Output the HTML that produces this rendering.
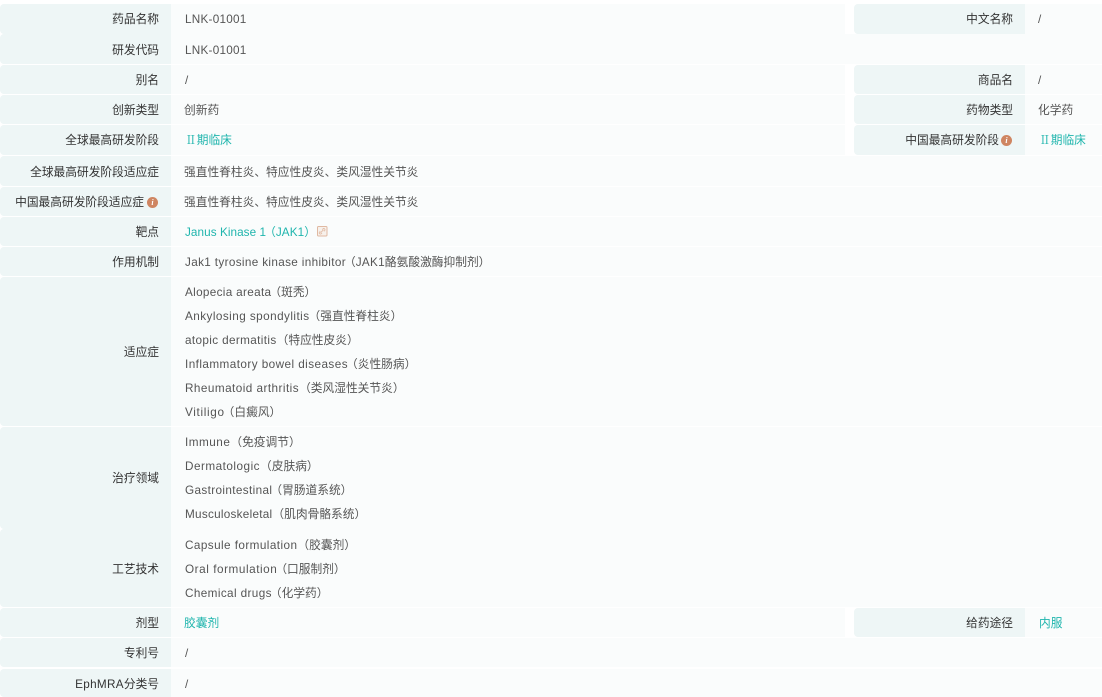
<!DOCTYPE html>
<html lang="zh-CN"><head><meta charset="utf-8"><title>药品信息</title>
<style>
html,body{margin:0;padding:0;width:1102px;height:697px;overflow:hidden;background:#fff}
body{position:relative;font-family:"Liberation Sans","Noto Sans CJK SC",sans-serif;font-size:11.73px;color:#555}
.b{position:absolute;box-sizing:border-box}
.l{background:#eef6f6;border-radius:4px 0 0 4px;left:0;width:171px}
.r{background:#eef6f6;border-radius:4px 0 0 4px;left:854px;width:171px}
.v{background:#fafcfc;left:171px;width:674px}
.v2{background:#fafcfc;left:1025px;width:77px}
.w{background:#fafcfc;left:171px;width:931px}
.t{position:absolute;white-space:nowrap;line-height:16px;margin-top:1px}
.a{text-align:right;color:#333}
.g{color:#1fb5ad}
.n{font-family:"Noto Serif CJK SC",serif;line-height:0}
.u{margin-top:0}
.p{margin-left:-2px}
.q{margin-left:-1px}
.i{position:absolute;width:11px;height:11px;border-radius:50%;background:#cf8561;color:#fff;font:italic bold 8px/11px "Liberation Serif",serif;text-align:center}
</style></head><body>
<div class="b l" style="top:4px;height:30px"></div><div class="b v" style="top:4px;height:30px"></div>
<div class="b r" style="top:4px;height:30px"></div><div class="b v2" style="top:4px;height:30px"></div>
<div class="b l" style="top:34px;height:30px"></div><div class="b v" style="top:34px;height:30px;width:931px"></div>
<div class="b l" style="top:65px;height:29px"></div><div class="b v" style="top:65px;height:29px"></div>
<div class="b r" style="top:65px;height:29px"></div><div class="b v2" style="top:65px;height:29px"></div>
<div class="b l" style="top:95px;height:29px"></div><div class="b v" style="top:95px;height:29px"></div>
<div class="b r" style="top:95px;height:29px"></div><div class="b v2" style="top:95px;height:29px"></div>
<div class="b l" style="top:125px;height:30px"></div><div class="b v" style="top:125px;height:30px"></div>
<div class="b r" style="top:125px;height:30px"></div><div class="b v2" style="top:125px;height:30px"></div>
<div class="b l" style="top:156px;height:30px"></div><div class="b w" style="top:156px;height:30px"></div>
<div class="b l" style="top:187px;height:29px"></div><div class="b w" style="top:187px;height:29px"></div>
<div class="b l" style="top:217px;height:29px"></div><div class="b w" style="top:217px;height:29px"></div>
<div class="b l" style="top:247px;height:29px"></div><div class="b w" style="top:247px;height:29px"></div>
<div class="b l" style="top:277px;height:149px"></div><div class="b w" style="top:277px;height:149px"></div>
<div class="b l" style="top:427px;height:102px"></div><div class="b w" style="top:427px;height:102px"></div>
<div class="b l" style="top:529px;height:78px"></div><div class="b w" style="top:529px;height:78px"></div>
<div class="b l" style="top:608px;height:29px"></div><div class="b v" style="top:608px;height:29px"></div>
<div class="b r" style="top:608px;height:29px"></div><div class="b v2" style="top:608px;height:29px"></div>
<div class="b l" style="top:638px;height:29px"></div><div class="b w" style="top:638px;height:29px"></div>
<div class="b l" style="top:669px;height:28px"></div><div class="b w" style="top:669px;height:28px"></div>

<div class="t a" style="right:943px;top:11px">药品名称</div><div class="t" style="left:185px;top:11px;letter-spacing:.25px">LNK-01001</div>
<div class="t a" style="right:89px;top:11px">中文名称</div><div class="t" style="left:1038px;top:11px">/</div>
<div class="t a" style="right:943px;top:42px">研发代码</div><div class="t" style="left:185px;top:42px;letter-spacing:.25px">LNK-01001</div>
<div class="t a" style="right:943px;top:72px">别名</div><div class="t" style="left:185px;top:72px">/</div>
<div class="t a" style="right:89px;top:72px">商品名</div><div class="t" style="left:1038px;top:72px">/</div>
<div class="t a" style="right:943px;top:102px">创新类型</div><div class="t" style="left:184px;top:102px">创新药</div>
<div class="t a" style="right:89px;top:102px">药物类型</div><div class="t" style="left:1038px;top:102px">化学药</div>
<div class="t a" style="right:943px;top:132px">全球最高研发阶段</div><div class="t g" style="left:185px;top:132px"><span class="n">Ⅱ</span>期临床</div>
<div class="t a" style="top:132px;right:103px">中国最高研发阶段</div><div class="i" style="left:1001px;top:135px">i</div><div class="t g" style="left:1039px;top:132px"><span class="n">Ⅱ</span>期临床</div>
<div class="t a" style="right:943px;top:164px">全球最高研发阶段适应症</div><div class="t" style="left:184px;top:164px">强直性脊柱炎、特应性皮炎、类风湿性关节炎</div>
<div class="t a" style="right:958px;top:194px">中国最高研发阶段适应症</div><div class="i" style="left:147px;top:197px">i</div><div class="t" style="left:184px;top:194px">强直性脊柱炎、特应性皮炎、类风湿性关节炎</div>
<div class="t a" style="right:943px;top:224px">靶点</div><div class="t g" style="left:185px;top:224px"><span style="letter-spacing:.07px">Janus Kinase 1</span><span class="p">（</span><span style="letter-spacing:.1px">JAK1</span>）</div>
<svg style="position:absolute;left:316px;top:225px" width="12" height="12" viewBox="0 0 12 12" fill="#f7f1ec" stroke="#e0b9a2"><rect x="1.5" y="1.5" width="9.5" height="9.5" rx="1"/><path d="M4.5 7.8l3-3M4.3 6.3 3.6 7a1.2 1.2 0 0 0 1.7 1.7l.7-.7M6.2 4.6l.7-.7A1.2 1.2 0 0 1 8.6 5.6l-.7.7" fill="none" stroke-width=".8"/></svg>
<div class="t a" style="right:943px;top:254px">作用机制</div><div class="t" style="left:185px;top:254px"><span style="letter-spacing:.35px">Jak1 tyrosine kinase inhibitor</span><span class="p">（</span><span style="letter-spacing:.3px">JAK1</span>酪氨酸激酶抑制剂）</div>

<div class="t a" style="right:943px;top:344px">适应症</div>
<div class="t" style="left:185px;top:284px"><span style="letter-spacing:.33px">Alopecia areata</span><span class="p">（</span>斑秃）</div>
<div class="t" style="left:185px;top:308px"><span style="letter-spacing:.45px">Ankylosing spondylitis</span><span class="q">（</span>强直性脊柱炎）</div>
<div class="t" style="left:185px;top:332px"><span style="letter-spacing:.37px">atopic dermatitis</span>（特应性皮炎）</div>
<div class="t" style="left:185px;top:356px"><span style="letter-spacing:.44px">Inflammatory bowel diseases</span><span class="p">（</span>炎性肠病）</div>
<div class="t" style="left:185px;top:380px"><span style="letter-spacing:.46px">Rheumatoid arthritis</span>（类风湿性关节炎）</div>
<div class="t" style="left:185px;top:404px"><span style="letter-spacing:.67px">Vitiligo</span><span class="p">（</span>白癜风）</div>

<div class="t a" style="right:943px;top:470px">治疗领域</div>
<div class="t" style="left:185px;top:434px"><span style="letter-spacing:.5px">Immune</span>（免疫调节）</div>
<div class="t" style="left:185px;top:458px"><span style="letter-spacing:.5px">Dermatologic</span>（皮肤病）</div>
<div class="t" style="left:185px;top:482px"><span style="letter-spacing:.37px">Gastrointestinal</span><span class="p">（</span>胃肠道系统）</div>
<div class="t" style="left:185px;top:506px"><span style="letter-spacing:.27px">Musculoskeletal</span>（肌肉骨骼系统）</div>

<div class="t a" style="right:943px;top:561px">工艺技术</div>
<div class="t" style="left:185px;top:537px"><span style="letter-spacing:.43px">Capsule formulation</span>（胶囊剂）</div>
<div class="t" style="left:185px;top:561px"><span style="letter-spacing:.56px">Oral formulation</span><span class="p">（</span>口服制剂）</div>
<div class="t" style="left:185px;top:585px"><span style="letter-spacing:.39px">Chemical drugs</span><span class="p">（</span>化学药）</div>

<div class="t a" style="right:943px;top:615px">剂型</div><div class="t g" style="left:184px;top:615px">胶囊剂</div>
<div class="t a" style="right:89px;top:615px">给药途径</div><div class="t g" style="left:1039px;top:615px">内服</div>
<div class="t a" style="right:943px;top:645px">专利号</div><div class="t" style="left:185px;top:645px">/</div>
<div class="t a" style="right:943px;top:676px"><span style="letter-spacing:.3px">EphMRA</span>分类号</div><div class="t" style="left:185px;top:676px">/</div>
</body></html>
